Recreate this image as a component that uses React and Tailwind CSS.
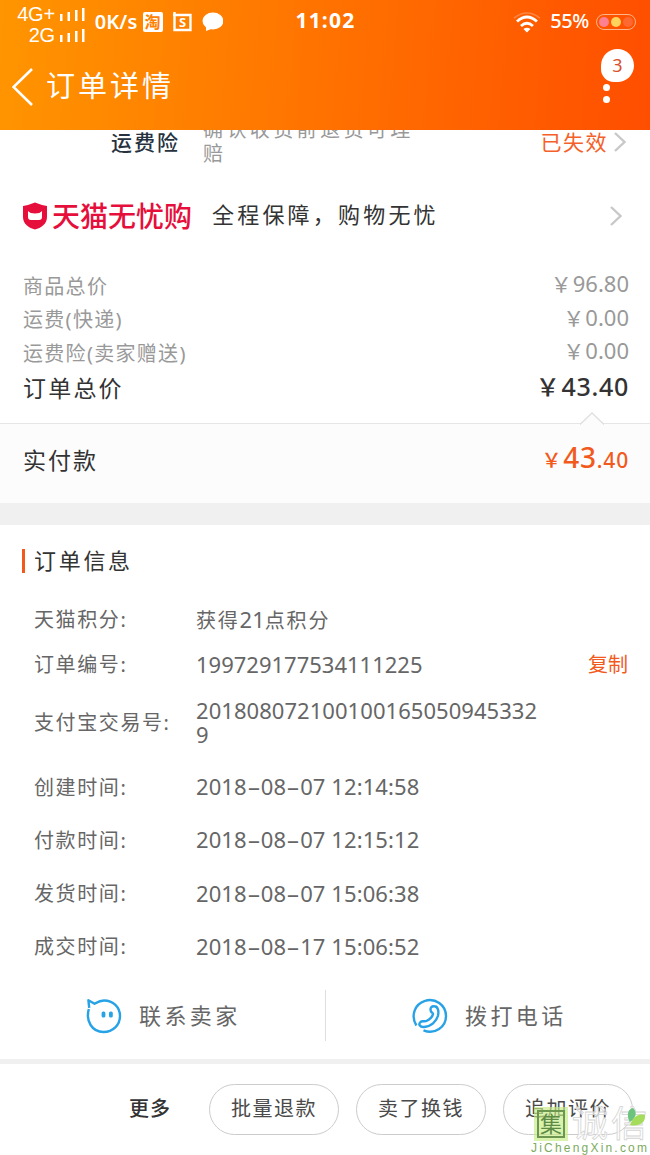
import { clsx } from "clsx";

const prices = [
  { label: "商品总价", value: "96.80" },
  { label: "运费(快递)", value: "0.00" },
  { label: "运费险(卖家赠送)", value: "0.00" },
];

const times = [
  { label: "创建时间:", value: "2018-08-07 12:14:58" },
  { label: "付款时间:", value: "2018-08-07 12:15:12" },
  { label: "发货时间:", value: "2018-08-07 15:06:38" },
  { label: "成交时间:", value: "2018-08-17 15:06:52" },
];

const actions = ["批量退款", "卖了换钱", "追加评价"];

function Arrow({ className }) {
  return (
    <svg viewBox="0 0 12 20" className={clsx("w-3 h-5 shrink-0", className)} fill="none" stroke="#c8c8c8" strokeWidth="2.4">
      <path d="M1 1 L10.5 10 L1 19" />
    </svg>
  );
}

function Signal() {
  return (
    <svg viewBox="0 0 25 13" className="w-[25px] h-[13px]" fill="#fff">
      <rect x="0" y="6" width="2.5" height="7" />
      <rect x="7.5" y="4" width="2.5" height="9" />
      <rect x="15" y="2" width="2.5" height="11" />
      <rect x="22" y="0" width="2.5" height="13" />
    </svg>
  );
}

function StatusBar() {
  return (
    <div className="h-[43px] flex items-center text-white pl-[14px] pr-[14px]">
      <div className="w-[71px] mt-[7px] flex flex-col items-end font-['Liberation_Sans'] text-[20px] leading-[21px] tracking-[-0.3px]">
        <div className="flex items-center gap-[5px] whitespace-nowrap">
          4G+ <Signal />
        </div>
        <div className="flex items-center gap-[5px]">
          2G <Signal />
        </div>
      </div>
      <span className="ml-[10px] w-[44px] text-[20px] font-semibold tracking-[0.1px] whitespace-nowrap">0K/s</span>
      <span className="ml-[4px] w-5 h-5 rounded-[2px] bg-white text-[#ff8100] text-[16px] leading-5 text-center font-bold">淘</span>
      <svg viewBox="0 0 20 20" className="ml-[10px] w-5 h-5" fill="none" stroke="#fff" strokeWidth="2.4">
        <path d="M1.5 0 V18 H17.5 V3 H0" />
        <text x="9.6" y="15.3" textAnchor="middle" fontSize="13" fontWeight="bold" fill="#fff" stroke="none">S</text>
      </svg>
      <svg viewBox="0 0 22 20" className="ml-[9px] w-[22px] h-5" fill="#fff">
        <ellipse cx="11" cy="9" rx="10.5" ry="8.5" />
        <path d="M4 13 L4 19 L12 16 Z" />
      </svg>
      <span className="ml-[72px] w-[62px] text-[21px] font-bold tracking-[1.2px] -mt-[1px]">11:02</span>
      <svg viewBox="0 0 28 22" className="ml-[156px] w-7 h-[22px] mt-[2px]" fill="none" stroke="#fff" strokeWidth="2.8">
        <path d="M1 6 Q14 -4 27 6" opacity="0.25" strokeWidth="1.6" />
        <path d="M4 9.5 Q14 0.5 24 9.5" />
        <path d="M8 14 Q14 8.5 20 14" />
        <path d="M10.5 17 Q14 14.5 17.5 17 L14 20.5 Z" fill="#fff" stroke="none" />
      </svg>
      <span className="ml-[9px] w-[42px] text-[20px] font-medium tracking-[-0.4px] -mt-[1px]">55%</span>
      <span className="ml-[4px] w-[40px] h-4 shrink-0 rounded-full border-[1.5px] border-[#ffb48a] flex items-center gap-[2px] pl-[2px]">
        <i className="w-[10px] h-[10px] rounded-full bg-[#ff8090]" />
        <i className="w-[10px] h-[10px] rounded-full bg-[#ffd35c]" />
        <i className="w-[10px] h-[10px] rounded-full bg-[#ff6830]" />
      </span>
    </div>
  );
}

function Header() {
  return (
    <header className="h-[130px] bg-linear-[95deg,#ff9500,#ff7900_40%,#ff4e00]">
      <StatusBar />
      <div className="h-[87px] flex items-center pl-3 pr-[16px] text-white">
        <svg viewBox="0 0 21 38" className="w-[21px] h-[38px]" fill="none" stroke="#fff" strokeWidth="2.6">
          <path d="M20 1 L1.5 19 L20 37" />
        </svg>
        <h1 className="ml-[13px] -mt-[2px] text-[29px] tracking-[3px]">订单详情</h1>
        <div className="ml-auto w-[33px] h-[78px] flex flex-col">
          <span className="w-[33px] h-[33px] mt-[1px] rounded-[16.5px] rounded-bl-[13px] bg-white text-[#d8502a] text-[18px] leading-[32px] text-center">3</span>
          <i className="ml-[2px] mt-[2px] w-[7px] h-[7px] rounded-full bg-white" />
          <i className="ml-[2px] mt-[5px] w-[7px] h-[7px] rounded-full bg-white" />
        </div>
      </div>
    </header>
  );
}

function Yen({ className }) {
  return <span className={clsx("font-['Noto_Sans_CJK_SC']", className)}>￥</span>;
}

// digits with the wide dash the phone font uses
function DateText({ value }) {
  return (
    <span className="whitespace-pre tracking-[0.1px]">
      {value.split("-").map((part, i) => (
        <span key={i}>
          {i > 0 && <span className="inline-block w-[14px] text-center scale-x-[1.9]">-</span>}
          {part}
        </span>
      ))}
    </span>
  );
}

function InfoRow({ label, className, children }) {
  return (
    <div className={clsx("flex items-center pl-[34px] pr-[22px] text-[#666]", className)}>
      <span className="w-[162px] mt-[2px] shrink-0 text-[20px] tracking-[1.6px]">{label}</span>
      {children}
    </div>
  );
}

function Contact() {
  return (
    <div className="h-[86px] flex items-center text-[22px] tracking-[3.4px] text-[#666]">
      <div className="w-[325px] pl-[86px] flex items-center">
        <svg viewBox="0 0 36 36" className="w-9 h-9" fill="none" stroke="#27a2e6" strokeWidth="2.4" strokeLinejoin="round">
          <path d="M2.8 11 C-0.5 23 6 34 17.5 34 C27 34 34 27 34 18 C34 9 27 2.5 18 2.5 C13.5 2.5 11.5 4 8.6 5.7 L2.4 2.2 L3.2 9.8" />
          <rect x="15.6" y="13.5" width="3.8" height="6" rx="1.6" fill="#27a2e6" stroke="none" />
          <rect x="23" y="13.5" width="3.8" height="6" rx="1.6" fill="#27a2e6" stroke="none" />
        </svg>
        <span className="ml-[17px]">联系卖家</span>
      </div>
      <div className="w-px h-[51px] bg-[#dedede]" />
      <div className="flex-1 pl-[86px] flex items-center">
        <svg viewBox="0 0 36 36" className="w-9 h-9" fill="none" stroke="#27a2e6" strokeWidth="2.4">
          <path d="M4.4 27.5 C-1.5 18 2.5 6 13 2.8 C23 -0.5 34 7 34 18 C34 29 23 37 11.5 32.4" />
          <path d="M19 13.5 C17.5 9.5 20 8 22.5 8.3 C26 8.6 27 13 26 17.5 C24.5 23.5 19 28.5 12 29 C8 29.3 6.2 26.5 8.3 24.2 C10 22.2 12.5 24 14.5 23 C17.5 21.5 20.5 18.5 21 16 C21.2 14.8 19.6 15 19 13.5 Z" />
        </svg>
        <span className="ml-[17px]">拨打电话</span>
      </div>
    </div>
  );
}

function Watermark() {
  return (
    <div className="absolute left-[530px] top-[1106px] w-[120px] h-[49px] overflow-hidden">
      <div className="flex h-[35px] items-center">
        <div className="ml-[4px] w-[34px] h-[34px] shrink-0 bg-[#c4ec84]/65 flex items-center justify-center">
          <span className="w-[28px] h-[28px] border-2 border-[#6d9650] text-[22px] leading-[23px] text-center text-[#5d8a45]">集</span>
        </div>
        <span className="ml-[4px] text-[36px] leading-[35px] tracking-[3px] text-white/70 whitespace-nowrap [-webkit-text-stroke:0.8px_#d4d4d4]">诚信</span>
      </div>
      <svg viewBox="0 0 20 20" className="absolute left-[97px] top-[1px] w-5 h-5">
        <path d="M3 15 C-1 8 1 2 6 1 C10 5 10 10 3 15 Z" fill="#6cc37d" />
        <path d="M3 18 C6 10 11 6 18 8 C19 16 11 20 3 18 Z" fill="#a5dc5b" />
      </svg>
      <div className="pl-[1px] font-['Liberation_Sans'] text-[12px] leading-[14px] tracking-[2.2px] text-[#7cab60] whitespace-nowrap">JiChengXin.com</div>
    </div>
  );
}

export default function App() {
  return (
    <div className="relative w-[650px] h-[1155px] overflow-hidden bg-white font-['Noto_Sans','Noto_Sans_CJK_SC',sans-serif] flex flex-col">
      <Header />

      {/* Shipping insurance, scrolled half under the header */}
      <div className="h-[55px] overflow-hidden flex items-start">
        <span className="ml-[111px] w-[92px] text-[21px] leading-6 tracking-[2px] font-medium text-[#263240]">运费险</span>
        <p className="w-[230px] -mt-[12px] text-[20px] leading-6 tracking-[3.4px] text-[#999]">确认收货前退货可理赔</p>
        <span className="ml-auto text-[21px] leading-6 tracking-[1.5px] text-[#f5602a]">已失效</span>
        <Arrow className="ml-[6px] mr-6 mt-[2px]" />
      </div>

      {/* Tmall guarantee */}
      <div className="h-[62px] flex items-center pl-[22px] pr-[28px]">
        <svg viewBox="0 0 26 28" className="w-[26px] h-7">
          <path d="M13 0.5 Q19 3 25 4 V15 C25 22 19 26 13 27.5 C7 26 1 22 1 15 V4 Q7 3 13 0.5 Z" fill="#e60f3c" />
          <path d="M6 9 Q8 11.5 13 11.5 Q18 11.5 20 9 V15 Q20 18 17 18 H9 Q6 18 6 15 Z" fill="#fff" />
        </svg>
        <span className="ml-[4px] w-[160px] text-[28px] leading-8 font-medium text-[#e60f3c] whitespace-nowrap">天猫无忧购</span>
        <span className="text-[22px] tracking-[3.2px] text-[#333] whitespace-nowrap -mt-[2px]">全程保障，购物无忧</span>
        <Arrow className="ml-auto" />
      </div>

      <div className="h-[176px] pt-[21px] pl-[23px] pr-[21px]">
        {prices.map(({ label, value }) => (
          <div key={label} className="h-[33.6px] flex items-center justify-between text-[#999]">
            <span className="text-[20px] tracking-[1.3px] mt-[4px]">{label}</span>
            <span className="text-[22px] -mt-[2px]">
              <Yen className="text-[21px] mr-[1px]" />
              {value}
            </span>
          </div>
        ))}
        <div className="h-[36px] flex items-center justify-between text-[#333]">
          <span className="text-[23px] tracking-[2.2px] mt-[2px]">订单总价</span>
          <span className="text-[25px] font-medium tracking-[0.7px]">
            <Yen className="text-[24px] mr-[1px]" />
            43.40
          </span>
        </div>
      </div>

      <div className="relative h-[80px] border-t border-[#e6e6e6] bg-[#fcfcfc] flex items-center justify-between pl-[23px] pr-[21px] pb-[6px]">
        <svg viewBox="0 0 24 13" className="absolute left-[580px] -top-[12px] w-6 h-[13px]" fill="#fcfcfc" stroke="#e0e0e0" strokeWidth="1.3">
          <path d="M0 12.5 L12 1 L24 12.5" />
        </svg>
        <span className="text-[23px] tracking-[2px] text-[#333]">实付款</span>
        <span className="-mt-[6px] text-[21px] font-medium text-[#f25a1d] tracking-[0.8px]">
          <Yen className="text-[20px] mr-[1px]" />
          <span className="text-[28px]">43</span>.40
        </span>
      </div>

      <div className="h-[22px] bg-[#f0f0f0]" />

      <div className="h-[72px] flex items-center pl-[22px]">
        <i className="w-[3px] h-6 bg-[#f25a1d]" />
        <h2 className="ml-[9px] text-[22px] tracking-[2.7px] text-[#333]">订单信息</h2>
      </div>

      <InfoRow label="天猫积分:" className="h-[45px]">
        <span className="text-[20px] tracking-[1.8px]">
          获得<span className="text-[22px] tracking-normal">21</span>点积分
        </span>
      </InfoRow>
      <InfoRow label="订单编号:" className="h-[45px]">
        <span className="text-[22px]">199729177534111225</span>
        <button className="ml-auto mt-[2px] text-[20px] text-[#f25a1d]">复制</button>
      </InfoRow>
      <InfoRow label="支付宝交易号:" className="h-[70px] mb-[3px]">
        <span className="w-[345px] text-[22px] leading-6 tracking-[0.05px] break-all">2018080721001001650509453329</span>
      </InfoRow>
      {times.map(({ label, value }) => (
        <InfoRow key={label} label={label} className="h-[53.3px] text-[22px]">
          <DateText value={value} />
        </InfoRow>
      ))}

      <Contact />
      <div className="h-[5px] bg-[#f0f0f0]" />

      <div className="h-[91px] flex items-center gap-[17px] pl-[129px]">
        <span className="w-[63px] text-[20px] tracking-[1px] font-medium text-[#333]">更多</span>
        {actions.map((text) => (
          <button key={text} className="w-[130px] h-[51px] rounded-full border border-[#ccc] text-[20px] tracking-[1.5px] text-[#4a4a4a]">
            {text}
          </button>
        ))}
      </div>

      <Watermark />
    </div>
  );
}
